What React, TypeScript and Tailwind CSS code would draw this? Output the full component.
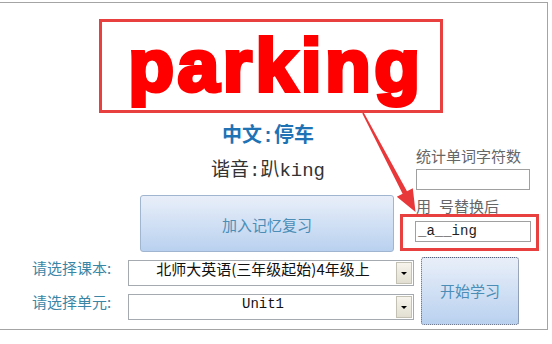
import React from 'react';

const cjk = "font-['Noto_Sans_CJK_SC',sans-serif]";
const mono = "font-['Liberation_Mono','Noto_Sans_CJK_SC',monospace]";

function Combo({ text, monoText }: { text: string; monoText?: boolean }) {
    return (
        <div className="relative w-[286px] h-[26px] border border-[#a5a9b0] bg-white flex">
            <div
                className={`w-[268px] text-center text-[#111] ${monoText ? mono + ' text-[14px] leading-[18px]' : cjk + ' text-[15px] leading-[16px]'}`}
            >
                {text}
            </div>
            <div className="absolute right-[1px] top-[1px] w-[16px] h-[22px] bg-gradient-to-b from-[#f6f4ec] to-[#e2dfd2] border border-[#c3c0b4] flex items-center justify-center">
                <div className="w-0 h-0 border-l-[3px] border-r-[3px] border-t-[3px] border-l-transparent border-r-transparent border-t-black" />
            </div>
        </div>
    );
}

export default function App() {
    return (
        <div className={`relative w-[552px] h-[344px] bg-white overflow-hidden ${cjk}`}>
            <div className="w-[548px] h-[328px] mt-[2px] border-t border-r border-b border-[#a4a4a4] flex flex-col">
                {/* word banner */}
                <div className="ml-[99px] mt-[16px] w-[344px] h-[94px] border-[3px] border-[#e8403f] flex justify-center pl-[10px]">
                    <span className="mt-[6px] font-['Liberation_Sans',Arial,sans-serif] font-bold text-[75px] leading-none text-[#ff0000] tracking-[3.5px] [-webkit-text-stroke:4px_#ff0000]">
                        parking
                    </span>
                </div>

                <div className="flex h-[139px]">
                    <div className="w-[400px] flex flex-col">
                        <div className="mt-[9px] pl-[136px] text-center text-[20px] leading-[24px] font-bold text-[#1f72b4]">
                            中文<span className="font-['Liberation_Mono',monospace]">:</span>停车
                        </div>
                        <div className={`mt-[10px] pl-[136px] text-center text-[19px] leading-[24px] text-[#333] ${mono}`}>
                            谐音:趴king
                        </div>
                        <button className="mt-[12px] ml-[140px] w-[254px] h-[60px] rounded-[3px] border border-[#9fb5d0] bg-gradient-to-b from-[#e9eff9] to-[#b9d1ef] text-[15px] text-[#4b8db6] pt-[4px]">
                            加入记忆复习
                        </button>
                    </div>
                    <div className="flex flex-col">
                        <div className="mt-[34px] pl-[16px] text-[15px] leading-[18px] text-[#666]">统计单词字符数</div>
                        <div className="mt-[4px] ml-[16px] w-[114px] h-[21px] border border-[#a0a0a0] bg-white" />
                        <div className="mt-[7px] pl-[16px] text-[15px] leading-[17px] text-[#666] flex">
                            用<span className="inline-block w-[8px]" />号替换后
                        </div>
                        <div className="w-[139px] h-[37px] border-[3px] border-[#e8403f]">
                            <div className={`mt-[4px] ml-[12px] w-[116px] h-[21px] border border-[#a0a0a0] bg-white pl-[2px] text-[14px] leading-[19px] text-[#222] ${mono}`}>
                                _a__ing
                            </div>
                        </div>
                    </div>
                </div>

                <div className="flex items-start mt-[5px]">
                    <div className="grid grid-cols-[128px_286px] gap-y-[8px] mt-[3px]">
                        <div className="pl-[32px] text-[15px] leading-[16px] text-[#3a86a6]">请选择课本:</div>
                        <Combo text="北师大英语(三年级起始)4年级上" />
                        <div className="pl-[32px] text-[15px] leading-[16px] text-[#3a86a6]">请选择单元:</div>
                        <Combo text="Unit1" monoText />
                    </div>
                    <button className="ml-[7px] w-[98px] h-[68px] rounded-[3px] border border-dotted border-[#56627a] bg-gradient-to-b from-[#e9eff9] to-[#b9d1ef] text-[15px] text-[#4b8db6]">
                        开始学习
                    </button>
                </div>
            </div>

            {/* annotation arrow */}
            <svg className="absolute left-0 top-0 pointer-events-none" width="552" height="344" viewBox="0 0 552 344">
                <polygon
                    fill="#e8383a"
                    points="363.7,112.6 407,191.3 412.8,188.3 415.5,212 396.8,196.7 402.6,193.7 362.3,113.4"
                />
            </svg>
        </div>
    );
}
